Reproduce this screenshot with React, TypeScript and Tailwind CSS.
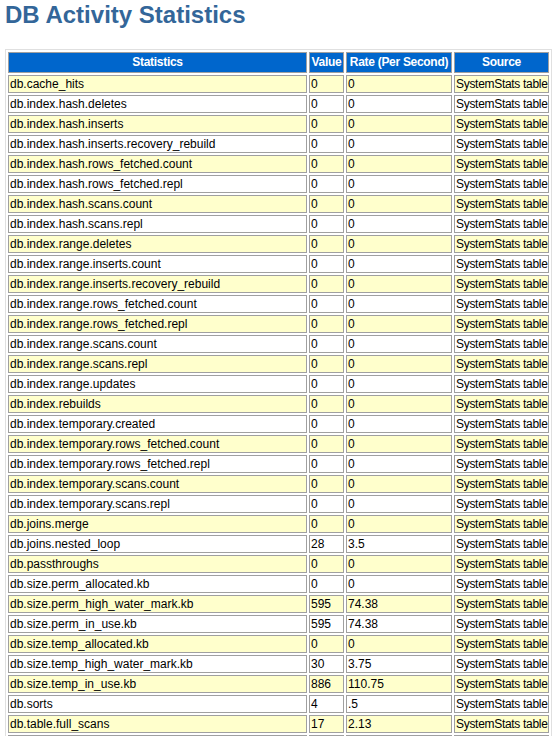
const rows: [string, string, string][] = [
  ["db.cache_hits","0","0"],["db.index.hash.deletes","0","0"],["db.index.hash.inserts","0","0"],
  ["db.index.hash.inserts.recovery_rebuild","0","0"],["db.index.hash.rows_fetched.count","0","0"],
  ["db.index.hash.rows_fetched.repl","0","0"],["db.index.hash.scans.count","0","0"],["db.index.hash.scans.repl","0","0"],
  ["db.index.range.deletes","0","0"],["db.index.range.inserts.count","0","0"],["db.index.range.inserts.recovery_rebuild","0","0"],
  ["db.index.range.rows_fetched.count","0","0"],["db.index.range.rows_fetched.repl","0","0"],["db.index.range.scans.count","0","0"],
  ["db.index.range.scans.repl","0","0"],["db.index.range.updates","0","0"],["db.index.rebuilds","0","0"],
  ["db.index.temporary.created","0","0"],["db.index.temporary.rows_fetched.count","0","0"],["db.index.temporary.rows_fetched.repl","0","0"],
  ["db.index.temporary.scans.count","0","0"],["db.index.temporary.scans.repl","0","0"],["db.joins.merge","0","0"],
  ["db.joins.nested_loop","28","3.5"],["db.passthroughs","0","0"],["db.size.perm_allocated.kb","0","0"],
  ["db.size.perm_high_water_mark.kb","595","74.38"],["db.size.perm_in_use.kb","595","74.38"],["db.size.temp_allocated.kb","0","0"],
  ["db.size.temp_high_water_mark.kb","30","3.75"],["db.size.temp_in_use.kb","886","110.75"],["db.sorts","4",".5"],
  ["db.table.full_scans","17","2.13"],["db.table.rows_fetched","0","0"],
];
const cell = "border border-[#a0a0a0] px-[1px] h-[18px] p-0 leading-[16px] whitespace-nowrap overflow-hidden";
const th = "border border-[#a0a0a0] bg-[#0066cc] text-white font-bold h-[21px] p-0 leading-[19px] whitespace-nowrap overflow-hidden text-center tracking-[-0.3px]";
export default function App() {
  return (
    <div className="bg-white h-[736px] overflow-hidden pl-[5px] pt-[1px]" style={{ fontFamily: '"Liberation Sans", Arial, sans-serif' }}>
      <h1 className="text-[24px] font-bold text-[#336699] leading-[28px] mb-[20px]">DB Activity Statistics</h1>
      <table className="table-fixed w-[546px] border-separate border-spacing-[2px] border border-[#e0e0e0] text-[12px] text-black">
        <colgroup>
          <col className="w-[299px]" /><col className="w-[35px]" /><col className="w-[106px]" /><col className="w-[95px]" />
        </colgroup>
        <thead>
          <tr>
            <th className={th}>Statistics</th><th className={th}>Value</th><th className={th}>Rate (Per Second)</th><th className={th}>Source</th>
          </tr>
        </thead>
        <tbody>
          {rows.map((r, i) => {
            const bg = i % 2 === 0 ? "bg-[#ffffcc]" : "bg-white";
            return (
              <tr key={i} className={bg}>
                <td className={cell}>{r[0]}</td><td className={cell}>{r[1]}</td><td className={cell}>{r[2]}</td>
                <td className={cell + " tracking-[-0.3px]"}>SystemStats table</td>
              </tr>
            );
          })}
        </tbody>
      </table>
    </div>
  );
}
